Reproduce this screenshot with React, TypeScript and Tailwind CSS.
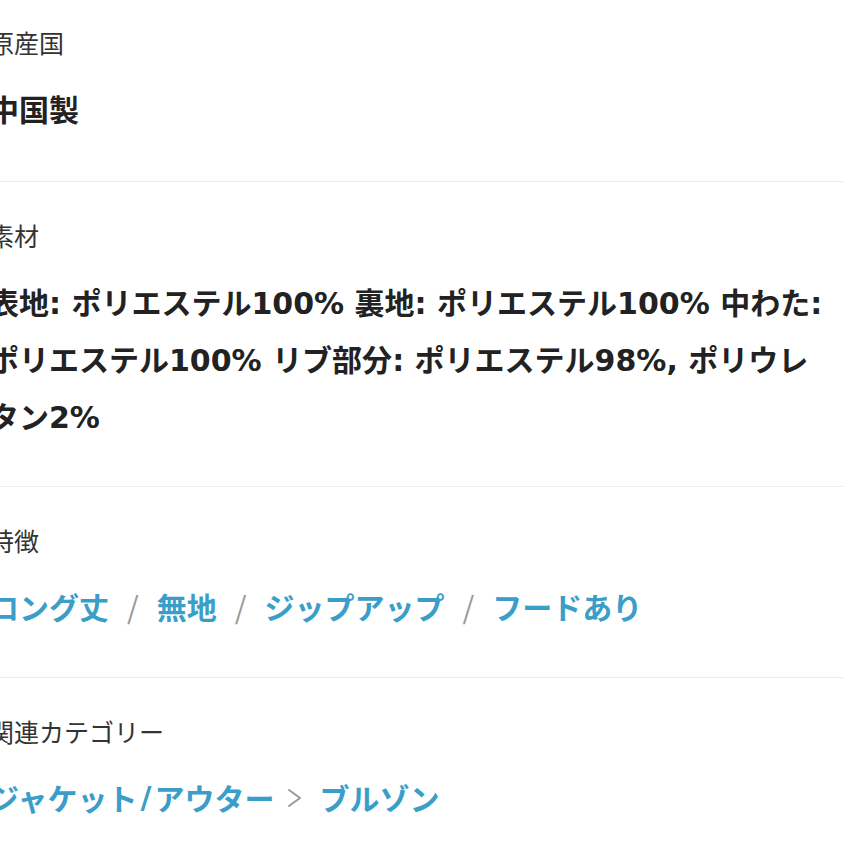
import React from "react";

const cjk = "font-['Noto_Sans_CJK_JP','Noto_Sans',sans-serif]";

// latin runs are set in a wider face so they sit as wide as the original's
function Line({ text }: { text: string }) {
  const parts = text.split(/([\x00-\x7F]+)/);
  return (
    <div className="h-[57px] whitespace-nowrap">
      {parts.map((p, i) =>
        /^[\x00-\x7F]+$/.test(p) ? (
          <span key={i} className="font-['DejaVu_Sans',sans-serif] leading-none">
            {p}
          </span>
        ) : (
          <React.Fragment key={i}>{p}</React.Fragment>
        )
      )}
    </div>
  );
}

function Section({
  label,
  first,
  children,
}: {
  label: string;
  first?: boolean;
  children: React.ReactNode;
}) {
  return (
    <div
      className={`${first ? "pt-[26px] pb-[44px]" : "pt-[37px] pb-[42px]"} border-b border-[#ececec] ${cjk}`}
    >
      <div className="ml-[-11px] text-[25px] leading-[32px] text-[#333]">{label}</div>
      <div className="ml-[-11px] mt-[22px] text-[30px] leading-[57px] font-semibold text-[#222]">
        {children}
      </div>
    </div>
  );
}

const features = ["ロング丈", "無地", "ジップアップ", "フードあり"];

export default function App() {
  return (
    <div className="w-[843px] h-[843px] overflow-hidden bg-white">
      <Section label="原産国" first>
        中国製
      </Section>
      <Section label="素材">
        <Line text="表地: ポリエステル100% 裏地: ポリエステル100% 中わた:" />
        <Line text="ポリエステル100% リブ部分: ポリエステル98%, ポリウレ" />
        <Line text="タン2%" />
      </Section>
      <Section label="特徴">
        <div className="flex items-center h-[57px]">
          {features.map((f, i) => (
            <React.Fragment key={f}>
              {i > 0 && <span className="mx-[18px] font-normal text-[#999]">/</span>}
              <span className="text-[#3a9ec9]">{f}</span>
            </React.Fragment>
          ))}
        </div>
      </Section>
      <Section label="関連カテゴリー">
        <div className="flex items-center h-[57px] text-[#3a9ec9]">
          <span>ジャケット</span>
          <span className="mx-[3px] font-['DejaVu_Sans',sans-serif]">/</span>
          <span>アウター</span>
          <svg className="ml-[13px] mr-[17px]" width="15" height="20" viewBox="0 0 15 20" fill="none">
            <path d="M2 2l11 8-11 8" stroke="#999" strokeWidth="2" strokeLinecap="round" strokeLinejoin="round" />
          </svg>
          <span>ブルゾン</span>
        </div>
      </Section>
    </div>
  );
}
